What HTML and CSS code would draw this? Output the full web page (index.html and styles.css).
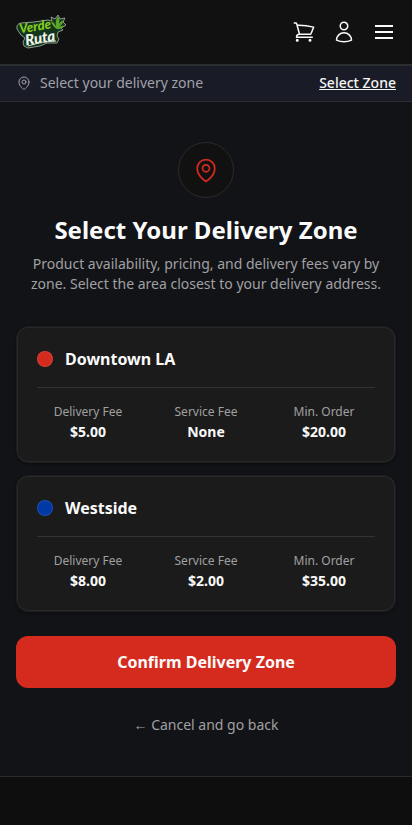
FILE: index.html
```html
<!DOCTYPE html>
<html lang="en">
<head>
<meta charset="utf-8">
<meta name="viewport" content="width=device-width, initial-scale=1">
<title>Select Your Delivery Zone – Verde Ruta</title>
<link rel="stylesheet" href="styles.css">
</head>
<body>
<header class="site-header">
  <a class="logo" href="#" aria-label="Verde Ruta">
    <svg class="logo-art" viewBox="0 0 50 34" width="50" height="34" aria-hidden="true">
      <path class="logo-plate" d="M1 14Q0 9 5 8L18 7 32 5 36 6 35 2 39 4 42 0 44 4 49 3 47 7 50 10 45 13 47 15 42 17 41 21 43 24 41 28 31 28 24 31 12 33 8 31 7 27 9 23 5 20Z"/>
      <path class="logo-leaf" d="M41 14Q36 11 35 6 38 7 40 11 39 5 42 1 45 6 42 11 44 6 48 5 47 9 43 12 46 10 49 11 45 15 41 14Z"/>
      <g transform="rotate(-9 25 17)">
        <text class="logo-word logo-verde" x="4" y="15" font-size="13">Verde</text>
        <text class="logo-word logo-ruta" x="8" y="28" font-size="15">Ruta</text>
      </g>
      <path class="logo-swash" d="M12 31Q25 26 40 26"/>
    </svg>
  </a>
  <nav class="actions" aria-label="Main">
    <a class="action" href="#" aria-label="Cart">
      <svg class="icon" viewBox="0 0 24 24"><path d="M2.25 3h1.386c.51 0 .955.343 1.087.835l.383 1.437M7.5 14.25a3 3 0 0 0-3 3h15.75m-12.75-3h11.218c1.121-2.3 2.1-4.684 2.924-7.138a60.114 60.114 0 0 0-16.536-1.84M7.5 14.25 5.106 5.272M6 20.25a.75.75 0 1 1-1.5 0 .75.75 0 0 1 1.5 0Zm12.75 0a.75.75 0 1 1-1.5 0 .75.75 0 0 1 1.5 0Z"/></svg>
    </a>
    <a class="action" href="#" aria-label="Account">
      <svg class="icon" viewBox="0 0 24 24"><path d="M15.75 6a3.75 3.75 0 1 1-7.5 0 3.75 3.75 0 0 1 7.5 0ZM4.501 20.118a7.5 7.5 0 0 1 14.998 0A17.933 17.933 0 0 1 12 21.75c-2.676 0-5.216-.584-7.499-1.632Z"/></svg>
    </a>
    <button class="action" type="button" aria-label="Menu">
      <svg class="icon icon-bold" viewBox="0 0 24 24"><path d="M3 6h18M3 12h18M3 18h18"/></svg>
    </button>
  </nav>
</header>

<section class="zone-bar" aria-label="Delivery zone">
  <svg class="icon icon-small" viewBox="0 0 24 24" aria-hidden="true"><path d="M15 10.5a3 3 0 1 1-6 0 3 3 0 0 1 6 0Z"/><path d="M19.5 10.5c0 7.142-7.5 11.25-7.5 11.25S4.5 17.642 4.5 10.5a7.5 7.5 0 1 1 15 0Z"/></svg>
  <span>Select your delivery zone</span>
  <a class="zone-link" href="#zones">Select Zone</a>
</section>

<main class="page">
  <div class="badge">
    <svg class="icon icon-large" viewBox="0 0 24 24" aria-hidden="true"><path d="M15 10.5a3 3 0 1 1-6 0 3 3 0 0 1 6 0Z"/><path d="M19.5 10.5c0 7.142-7.5 11.25-7.5 11.25S4.5 17.642 4.5 10.5a7.5 7.5 0 1 1 15 0Z"/></svg>
  </div>
  <h1 class="title">Select Your Delivery Zone</h1>
  <p class="intro">Product availability, pricing, and delivery fees vary by zone. Select the area closest to your delivery address.</p>

  <div class="zones" id="zones">
    <button class="zone" type="button">
      <span class="zone-name"><span class="dot dot-red"></span>Downtown LA</span>
      <span class="fees">
        <span class="fee"><span class="fee-label">Delivery Fee</span><span class="fee-value">$5.00</span></span>
        <span class="fee"><span class="fee-label">Service Fee</span><span class="fee-value">None</span></span>
        <span class="fee"><span class="fee-label">Min. Order</span><span class="fee-value">$20.00</span></span>
      </span>
    </button>
    <button class="zone" type="button">
      <span class="zone-name"><span class="dot dot-blue"></span>Westside</span>
      <span class="fees">
        <span class="fee"><span class="fee-label">Delivery Fee</span><span class="fee-value">$8.00</span></span>
        <span class="fee"><span class="fee-label">Service Fee</span><span class="fee-value">$2.00</span></span>
        <span class="fee"><span class="fee-label">Min. Order</span><span class="fee-value">$35.00</span></span>
      </span>
    </button>
  </div>

  <button class="confirm" type="button">Confirm Delivery Zone</button>
  <p class="cancel"><a class="cancel-link" href="#">← Cancel and go back</a></p>
</main>
<footer class="site-footer"></footer>
</body>
</html>
```
FILE: styles.css
```css
* {
  box-sizing: border-box;
}

body {
  margin: 0;
  min-height: 100vh;
  display: flex;
  flex-direction: column;
  background: #121317;
  color: #fafafa;
  font-family: "Noto Sans", sans-serif;
  font-size: 16px;
  line-height: 24px;
}

h1,
p {
  margin: 0;
}

a {
  color: inherit;
}

button {
  font: inherit;
  color: inherit;
  cursor: pointer;
}

.icon {
  display: block;
  width: 24px;
  height: 24px;
  fill: none;
  stroke: currentColor;
  stroke-width: 1.5;
  stroke-linecap: round;
  stroke-linejoin: round;
}

.icon-bold {
  stroke-width: 2;
  stroke-linecap: butt;
}

.icon-small {
  width: 16px;
  height: 16px;
}

.icon-large {
  width: 28px;
  height: 28px;
}

.site-header {
  display: flex;
  align-items: center;
  justify-content: space-between;
  height: 65px;
  padding: 0 16px;
  background: #111111;
  border-bottom: 1px solid #2b2d2e;
}

.logo-art {
  display: block;
}

.logo-plate {
  fill: #12351c;
  stroke: #8e9a8e;
  stroke-width: 1;
}

.logo-leaf {
  fill: #5fa32c;
}

.logo-word {
  font-family: Lato, sans-serif;
  font-weight: 900;
  font-style: italic;
}

.logo-verde {
  fill: #86cc20;
}

.logo-ruta {
  fill: #f1f5ec;
}

.logo-swash {
  fill: none;
  stroke: #d9e4d4;
  stroke-width: 1;
}

.actions {
  display: flex;
  gap: 16px;
}

.action {
  display: block;
  padding: 0;
  border: 0;
  background: none;
}

.zone-bar {
  display: flex;
  align-items: center;
  gap: 8px;
  padding: 8px 16px;
  background: #191b26;
  border-bottom: 1px solid #2b2d2e;
  box-shadow: inset 0 1px #2b2d2e;
  color: #a1a1aa;
  font-size: 14px;
  line-height: 20px;
}

.zone-link {
  margin-left: auto;
  color: #f4f4f5;
  font-weight: 500;
}

.page {
  display: flex;
  flex-direction: column;
  padding: 40px 16px 39px;
}

.badge {
  display: grid;
  place-items: center;
  align-self: center;
  width: 56px;
  height: 56px;
  border: 1px solid #2b2b2b;
  border-radius: 50%;
  background: #111111;
  color: #d52b1e;
}

.title {
  margin-top: 16px;
  font-size: 24px;
  line-height: 32px;
  font-weight: 700;
  text-align: center;
}

.intro {
  margin-top: 8px;
  color: #a0a0a3;
  font-size: 14px;
  line-height: 20px;
  text-align: center;
}

.zones {
  display: grid;
  gap: 12px;
  margin-top: 32px;
}

.zone {
  display: block;
  padding: 20px;
  border: 1px solid #1d1e1f;
  border-radius: 12px;
  background: #1b1b1b;
  box-shadow: inset 0 0 0 1px #272727, 0 1px 3px #0006;
}

.zone-name {
  display: flex;
  align-items: center;
  gap: 12px;
  font-weight: 700;
}

.dot {
  width: 16px;
  height: 16px;
  border: 1px solid #ffffff1a;
  border-radius: 50%;
}

.dot-red {
  background: #d52b1e;
}

.dot-blue {
  background: #0039a6;
}

.fees {
  display: grid;
  grid-template-columns: repeat(3, 1fr);
  gap: 16px;
  margin-top: 16px;
  padding-top: 16px;
  border-top: 1px solid #333333;
}

.fee {
  display: grid;
  gap: 2px;
  text-align: center;
}

.fee-label {
  color: #a0a0a0;
  font-size: 12px;
  line-height: 16px;
}

.fee-value {
  font-size: 14px;
  line-height: 20px;
  font-weight: 700;
}

.confirm {
  margin-top: 24px;
  padding: 14px 16px;
  border: 0;
  border-radius: 12px;
  background: #d52b1e;
  font-weight: 700;
}

.cancel {
  margin-top: 24px;
  text-align: center;
}

.cancel-link {
  color: #a0a0a3;
  font-size: 14px;
  text-decoration: none;
}

.site-footer {
  flex: 1;
  border-top: 1px solid #2b2b2b;
  background: #0e0e0e;
}
```
